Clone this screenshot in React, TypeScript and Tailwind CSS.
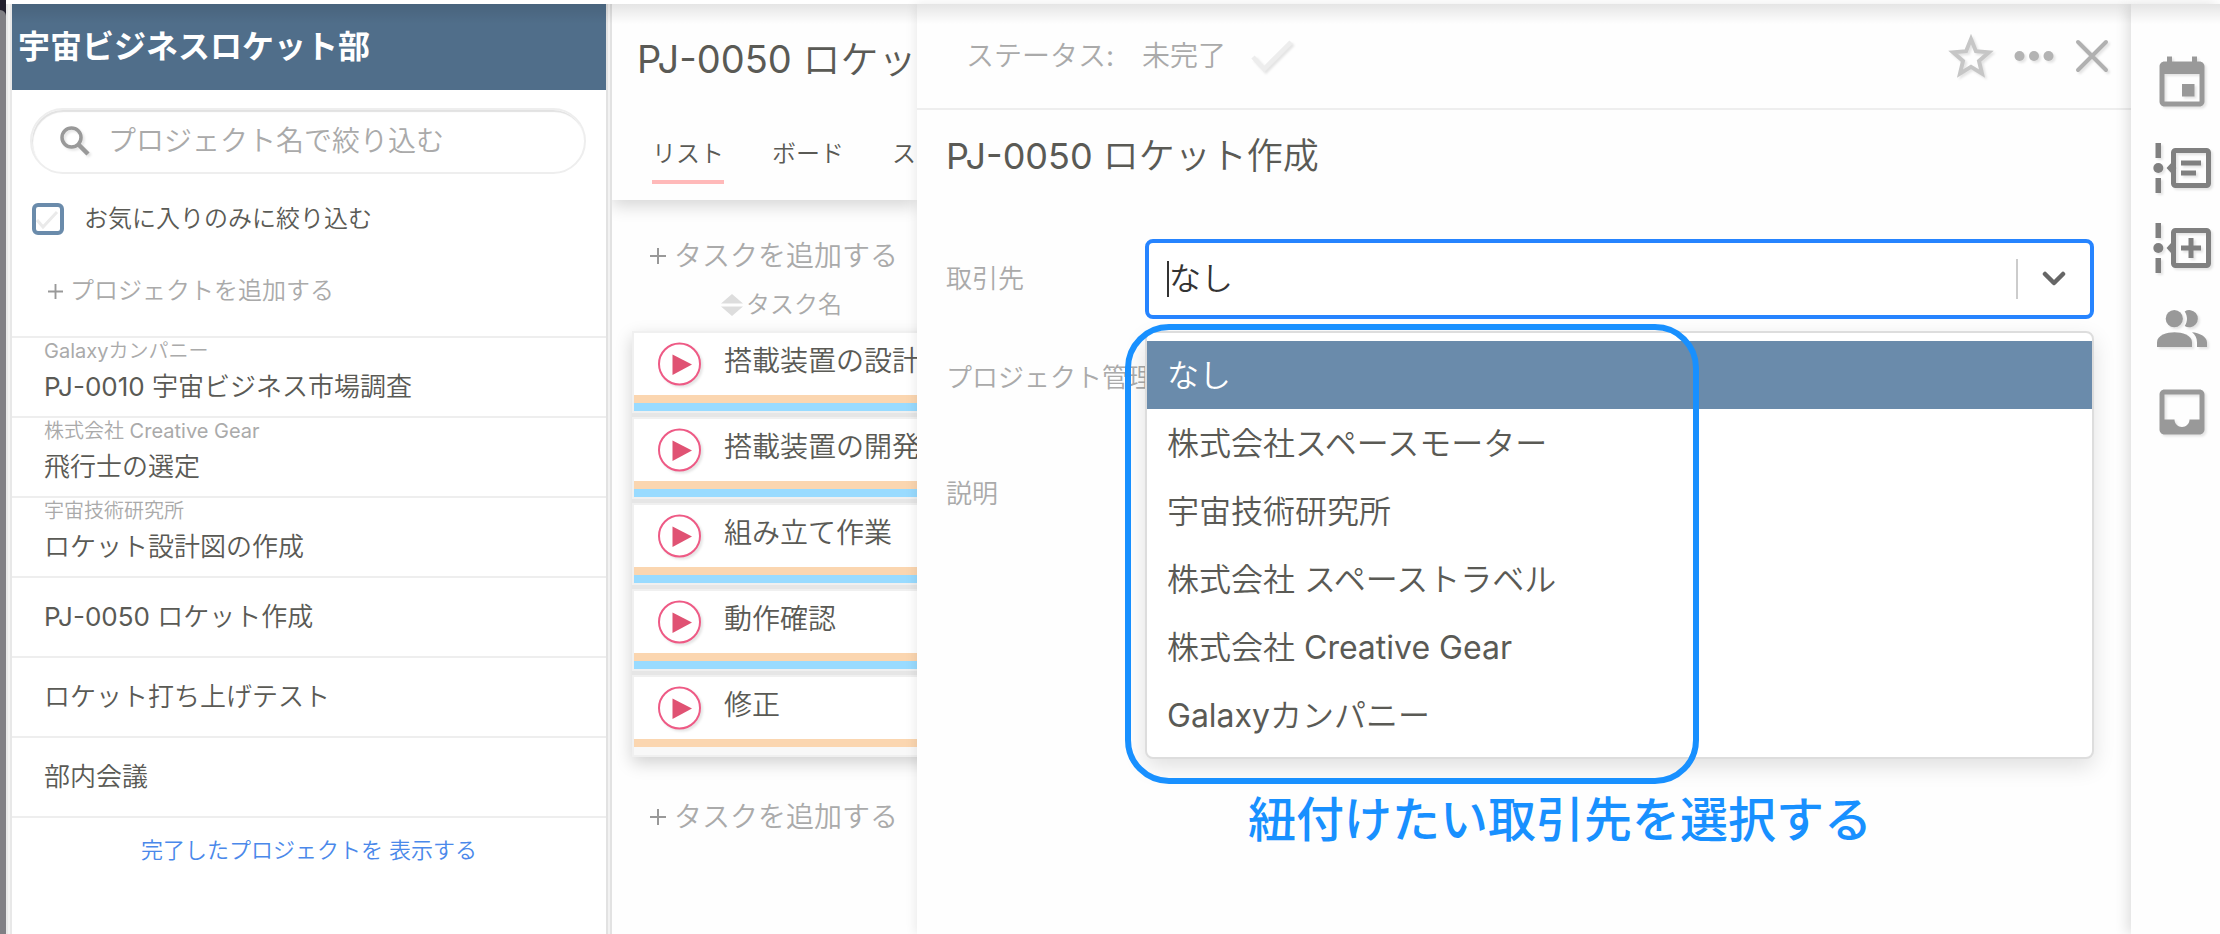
import type { ReactNode } from "react";

type Project = { client?: string; name: string };
type Task = { name: string; hasBlue: boolean };

const projects: Project[] = [
  { client: "Galaxyカンパニー", name: "PJ-0010 宇宙ビジネス市場調査" },
  { client: "株式会社 Creative Gear", name: "飛行士の選定" },
  { client: "宇宙技術研究所", name: "ロケット設計図の作成" },
  { name: "PJ-0050 ロケット作成" },
  { name: "ロケット打ち上げテスト" },
  { name: "部内会議" },
];

const tasks: Task[] = [
  { name: "搭載装置の設計", hasBlue: true },
  { name: "搭載装置の開発", hasBlue: true },
  { name: "組み立て作業", hasBlue: true },
  { name: "動作確認", hasBlue: true },
  { name: "修正", hasBlue: false },
];

const clients = [
  "なし",
  "株式会社スペースモーター",
  "宇宙技術研究所",
  "株式会社 スペーストラベル",
  "株式会社 Creative Gear",
  "Galaxyカンパニー",
];

const iconShadow = "drop-shadow-[2px_2px_1px_rgba(0,0,0,0.1)]";

function PlusIcon({ className }: { className: string }) {
  return (
    <svg viewBox="0 0 16 16" className={className} fill="none" stroke="#999" strokeWidth="2" aria-hidden="true">
      <path d="M8 0v16M0 8h16" />
    </svg>
  );
}

function Sidebar() {
  return (
    <aside className="flex w-[594px] shrink-0 flex-col bg-white">
      <header className="flex h-[86px] items-center bg-[#506e8a] px-[6px]">
        <h1 className="font-['Inter','Noto_Sans_CJK_JP',sans-serif] text-[32px] leading-10 font-bold text-white">宇宙ビジネスロケット部</h1>
      </header>
      <label className="mx-[18px] mt-[18px] mr-5 flex h-[66px] items-center rounded-full border-2 border-[#eee] px-7 shadow-[inset_1px_2px_1px_#e2e2e2]">
        <svg viewBox="0 0 30 30" className={`h-[30px] w-[30px] ${iconShadow}`} fill="none" stroke="#999" aria-hidden="true">
          <circle cx="11.5" cy="11.5" r="9.5" strokeWidth="3.5" />
          <path d="M18.5 18.5l9.5 9.5" strokeWidth="4.5" />
        </svg>
        <input
          type="text"
          aria-label="プロジェクト名で絞り込む"
          placeholder="プロジェクト名で絞り込む"
          className="ml-[18px] min-w-0 flex-1 bg-transparent text-[28px] leading-10 outline-none placeholder:text-[#aaa]"
        />
      </label>
      <label className="mt-[25px] ml-5 flex h-10 items-center gap-5 text-2xl leading-10 text-[#5a5a55]">
        <span className="grid h-8 w-8">
          <input type="checkbox" className="col-start-1 row-start-1 h-8 w-8 appearance-none rounded-[6px] border-4 border-[#6a8bab] bg-white" />
          <svg viewBox="0 0 32 32" className="pointer-events-none col-start-1 row-start-1 h-8 w-8" fill="none" stroke="#eaeaea" strokeWidth="3" aria-hidden="true">
            <path d="M5 17l6 7L25 9" />
          </svg>
        </span>
        お気に入りのみに絞り込む
      </label>
      <button className="mt-8 ml-9 flex h-10 items-center gap-[7px] self-start text-2xl leading-10 text-[#aaa]">
        <PlusIcon className="h-[15px] w-[15px]" />
        プロジェクトを追加する
      </button>
      <ul className="mt-[25px] border-t-2 border-[#eee]">
        {projects.map((p) => (
          <li key={p.name} className="border-b-2 border-[#eee]">
            <a href="#project" className="flex h-[78px] flex-col justify-center px-8 text-[26px] leading-9 text-[#5a5a55]">
              {p.client ? <span className="-mt-3 mb-1 text-xl leading-7 text-[#aaa]">{p.client}</span> : null}
              <span>{p.name}</span>
            </a>
          </li>
        ))}
      </ul>
      <button className="mt-[14px] self-center text-[22px] leading-9 text-[#4a88ea]">完了したプロジェクトを 表示する</button>
    </aside>
  );
}

function AddTask() {
  return (
    <button className="flex h-10 items-center gap-2 text-[28px] leading-10 whitespace-nowrap text-[#aaa]">
      <PlusIcon className="h-4 w-4 shrink-0" />
      タスクを追加する
    </button>
  );
}

function TaskColumn() {
  return (
    <main className="w-[305px] shrink-0 overflow-hidden bg-[#fefefe]">
      <header className="h-[196px] bg-[#fefefe] pl-[25px] whitespace-nowrap text-[#5a5a55] shadow-[0_6px_16px_rgba(0,0,0,0.16)]">
        <h2 className="pt-[30px] text-[38px] leading-[50px]">PJ-0050 ロケット作成</h2>
        <nav className="mt-[52px] ml-[15px] flex gap-12 text-2xl leading-9">
          <a href="#list" className="h-12 shrink-0 border-b-4 border-[#ffb9b9]">リスト</a>
          <a href="#board" className="shrink-0">ボード</a>
          <a href="#schedule" className="shrink-0">スケジュール</a>
        </nav>
      </header>
      <div className="pt-9 pl-[38px]">
        <AddTask />
      </div>
      <div className="mt-[11px] flex h-9 items-center gap-[3px] pl-[109px] text-2xl leading-9 text-[#aaa]">
        <svg viewBox="0 0 22 22" className="h-[22px] w-[22px]" fill="#ddd" aria-hidden="true">
          <path d="M11 0l11 9.5H0zM11 22l11-9.5H0z" />
        </svg>
        タスク名
      </div>
      <ul className="mt-2 ml-5 w-[320px] bg-[#e6e6e6] shadow-[0_6px_16px_rgba(0,0,0,0.18)]">
        {tasks.map((t) => (
          <li key={t.name} className="mb-1 border-2 border-[#f0f0f0] bg-white last:mb-0">
            <div className="flex h-[62px] gap-[22px] pt-2 pl-6 whitespace-nowrap">
              <button aria-label={`${t.name}を開始`} className="h-[46px] w-[44px] shrink-0">
                <svg viewBox="0 0 44 46" className={`h-[46px] w-[44px] ${iconShadow}`}>
                  <circle cx="21.5" cy="23" r="20.5" fill="#fff" stroke="#ee5a85" strokeWidth="2" />
                  <path d="M14.5 13.5L34 23.5L14.5 34z" fill="#e05273" />
                </svg>
              </button>
              <span className="text-[28px] leading-10 text-[#5a5a55]">{t.name}</span>
            </div>
            <div className="h-2 bg-[#fbd6b0]" />
            <div className={t.hasBlue ? "h-2 bg-[#99dbff]" : "h-2 bg-[#f8f8f8]"} />
          </li>
        ))}
      </ul>
      <div className="mt-10 pl-[38px]">
        <AddTask />
      </div>
    </main>
  );
}

function ClientField() {
  return (
    <div className="relative">
      <div className="flex h-20 items-center rounded-lg border-4 border-[#2684ff] bg-white">
        <span className="ml-[18px] h-9 w-[2px] bg-[#333]" />
        <input
          id="client"
          role="combobox"
          aria-expanded="true"
          aria-controls="client-options"
          readOnly
          value="なし"
          className="min-w-0 flex-1 bg-transparent text-[32px] leading-[48px] text-[#333] outline-none"
        />
        <span className="h-10 w-[2px] bg-[#ccc]" />
        <button aria-label="取引先の一覧を開く" className="flex w-[72px] items-center justify-center">
          <svg viewBox="0 0 24 16" className="h-4 w-6" fill="none" stroke="#666" strokeWidth="4.5" strokeLinecap="round" strokeLinejoin="round" aria-hidden="true">
            <path d="M3 3l9 9 9-9" />
          </svg>
        </button>
      </div>
      <ul
        id="client-options"
        role="listbox"
        aria-label="取引先"
        className="absolute top-[92px] right-0 left-0 z-10 rounded-lg border-2 border-[#ddd] bg-white py-2 shadow-[0_8px_22px_rgba(0,0,0,0.12)]"
      >
        {clients.map((c, i) => (
          <li
            key={c}
            role="option"
            aria-selected={i === 0}
            className={
              i === 0
                ? "h-[68px] bg-[#6a8bab] px-5 text-[32px] leading-[70px] text-white"
                : "h-[68px] px-5 text-[32px] leading-[70px] text-[#5a5a55]"
            }
          >
            {c}
          </li>
        ))}
      </ul>
      <div className="pointer-events-none absolute top-[85px] -left-5 z-20 h-[460px] w-[574px] rounded-[44px] border-6 border-[#1890ff]" />
      <p className="absolute top-[553px] left-[103px] z-20 font-['Inter','Noto_Sans_CJK_JP',sans-serif] text-5xl leading-[56px] font-medium whitespace-nowrap text-[#1890ff]">
        紐付けたい取引先を選択する
      </p>
    </div>
  );
}

function DetailPanel() {
  return (
    <section className="z-10 flex min-w-0 flex-1 flex-col bg-[#fefefe] shadow-[-2px_0_10px_rgba(0,0,0,0.08)]">
      <header className="flex h-[106px] items-center justify-between border-b-2 border-[#eee] pr-[21px] pl-[49px] text-[28px] leading-10 text-[#aaa]">
        <div className="flex items-center gap-7">
          <span>ステータス:</span>
          <button className="flex items-center gap-6">
            未完了
            <svg viewBox="0 0 44 34" className={`h-[34px] w-11 ${iconShadow}`} fill="none" stroke="#ededed" strokeWidth="4.5" aria-hidden="true">
              <path d="M3 18l11 12L41 3" />
            </svg>
          </button>
        </div>
        <div className="flex items-center gap-5">
          <button aria-label="お気に入り">
            <svg viewBox="0 0 46 46" className={`h-[46px] w-[46px] ${iconShadow}`} fill="none" stroke="#c6c6c6" strokeWidth="4" aria-hidden="true">
              <path d="M23 6l4.900 12.200 13 1.100-9.900 8.600 3 12.700L23 33.800l-11 6.800 3-12.700-9.900-8.600 13-1.100z" />
            </svg>
          </button>
          <button aria-label="その他">
            <svg viewBox="0 0 40 12" className={`h-3 w-10 ${iconShadow}`} fill="#b3b3b3" aria-hidden="true">
              <circle cx="5.500" cy="6" r="5" />
              <circle cx="20" cy="6" r="5" />
              <circle cx="34.500" cy="6" r="5" />
            </svg>
          </button>
          <button aria-label="閉じる">
            <svg viewBox="0 0 36 36" className={`h-9 w-9 ${iconShadow}`} fill="none" stroke="#b0b0b0" strokeWidth="4" strokeLinecap="round" aria-hidden="true">
              <path d="M4 4l28 28M32 4L4 32" />
            </svg>
          </button>
        </div>
      </header>
      <div className="pr-[37px] pl-[29px]">
        <h2 className="mt-[22px] text-[36px] leading-[48px] text-[#5a5a55]">PJ-0050 ロケット作成</h2>
        <div className="mt-[59px] grid grid-cols-[199px_1fr] items-center">
          <label htmlFor="client" className="text-[26px] leading-10 text-[#aaa]">取引先</label>
          <ClientField />
        </div>
        <div className="mt-[39px] text-[26px] leading-10 text-[#aaa]">プロジェクト管理者</div>
        <div className="mt-[76px] text-[26px] leading-10 text-[#aaa]">説明</div>
      </div>
    </section>
  );
}

function RailButton({ label, children }: { label: string; children: ReactNode }) {
  return (
    <button aria-label={label} className="h-[60px] w-[60px]">
      <svg viewBox="0 0 60 60" className={`h-[60px] w-[60px] ${iconShadow}`}>
        {children}
      </svg>
    </button>
  );
}

function TimelineBase() {
  return (
    <>
      <path d="M3.500 5h5.500v15H3.500zM3.500 40h5.500v15H3.500z" fill="#808080" />
      <circle cx="6.300" cy="30" r="5" fill="#808080" />
      <rect x="21.500" y="12.500" width="35" height="35" rx="2" fill="none" stroke="#808080" strokeWidth="5" />
    </>
  );
}

function Rail() {
  return (
    <aside className="z-20 flex w-[89px] shrink-0 flex-col items-center gap-[22px] bg-[#fefefe] pt-[50px] pl-3 shadow-[-4px_0_12px_rgba(0,0,0,0.12)]">
      <RailButton label="カレンダー">
        <path
          fill="#999"
          transform="scale(2.5)"
          d="M17 12h-5v5h5v-5zM16 1v2H8V1H6v2H5c-1.110 0-1.990.9-1.990 2L3 19c0 1.100.89 2 2 2h14c1.100 0 2-.9 2-2V5c0-1.100-.9-2-2-2h-1V1h-2zm3 18H5V8h14v11z"
        />
      </RailButton>
      <RailButton label="タイムライン">
        <g transform="translate(0 2)">
          <TimelineBase />
          <path d="M14.500 30l7-7.500v5l3 2.500-3 2.500v5z" fill="#808080" />
          <path d="M29 22.500h20v5H29zM29 32.500h15v5H29z" fill="#808080" />
        </g>
      </RailButton>
      <RailButton label="タイムラインに追加">
        <TimelineBase />
        <path d="M14.500 30l5-5.500v11z" fill="#808080" />
        <path d="M36.500 20h5v7.500H49v5h-7.500V40h-5v-7.500H29v-5h7.500z" fill="#808080" />
      </RailButton>
      <RailButton label="メンバー">
        <g fill="#999" transform="translate(0 -2)">
          <circle cx="22.300" cy="20.700" r="8.600" />
          <path d="M32.700 13.400a8.600 8.600 0 1 1 0 14.600c3-4.600 3-10 0-14.600z" />
          <path d="M5 49v-4.500c0-7.500 10-10.200 17.500-10.200S40 37 40 44.500V49z" />
          <path d="M40 34.300c3.200 2.300 5 5.500 5 10.200V49h10v-4.500c0-6-8-9.600-15-10.200z" />
        </g>
      </RailButton>
      <RailButton label="受信箱">
        <path
          fill="#999"
          transform="scale(2.5)"
          d="M19 3H4.990c-1.110 0-1.980.89-1.980 2L3 19c0 1.100.88 2 1.990 2H19c1.100 0 2-.9 2-2V5c0-1.110-.9-2-2-2zm0 12h-4c0 1.660-1.350 3-3 3s-3-1.340-3-3H4.990V5H19v10z"
        />
      </RailButton>
    </aside>
  );
}

export default function App() {
  return (
    <div className="relative flex min-h-screen w-full flex-col overflow-hidden bg-white font-['Inter','Noto_Sans_CJK_JP_DemiLight','Noto_Sans_CJK_JP',sans-serif] font-normal">
      <div className="flex h-1 shrink-0">
        <span className="w-[6px] bg-[#22202e]" />
      </div>
      <div className="flex flex-1">
        <div className="flex w-[6px] shrink-0 bg-[#22202e]">
          <span className="mt-[6px] w-full rounded-tr-[6px] bg-[#807f84]" />
        </div>
        <div className="w-[6px] shrink-0 border-x-2 border-[#e8e8e8] bg-[#f2f2f2]" />
        <Sidebar />
        <div className="w-[6px] shrink-0 border-x-2 border-[#e2e2e2] bg-[#f2f2f2]" />
        <TaskColumn />
        <DetailPanel />
        <Rail />
      </div>
      <div className="pointer-events-none absolute top-1 right-0 left-3 z-30 h-5 bg-linear-to-b from-black/10 to-transparent" />
    </div>
  );
}
